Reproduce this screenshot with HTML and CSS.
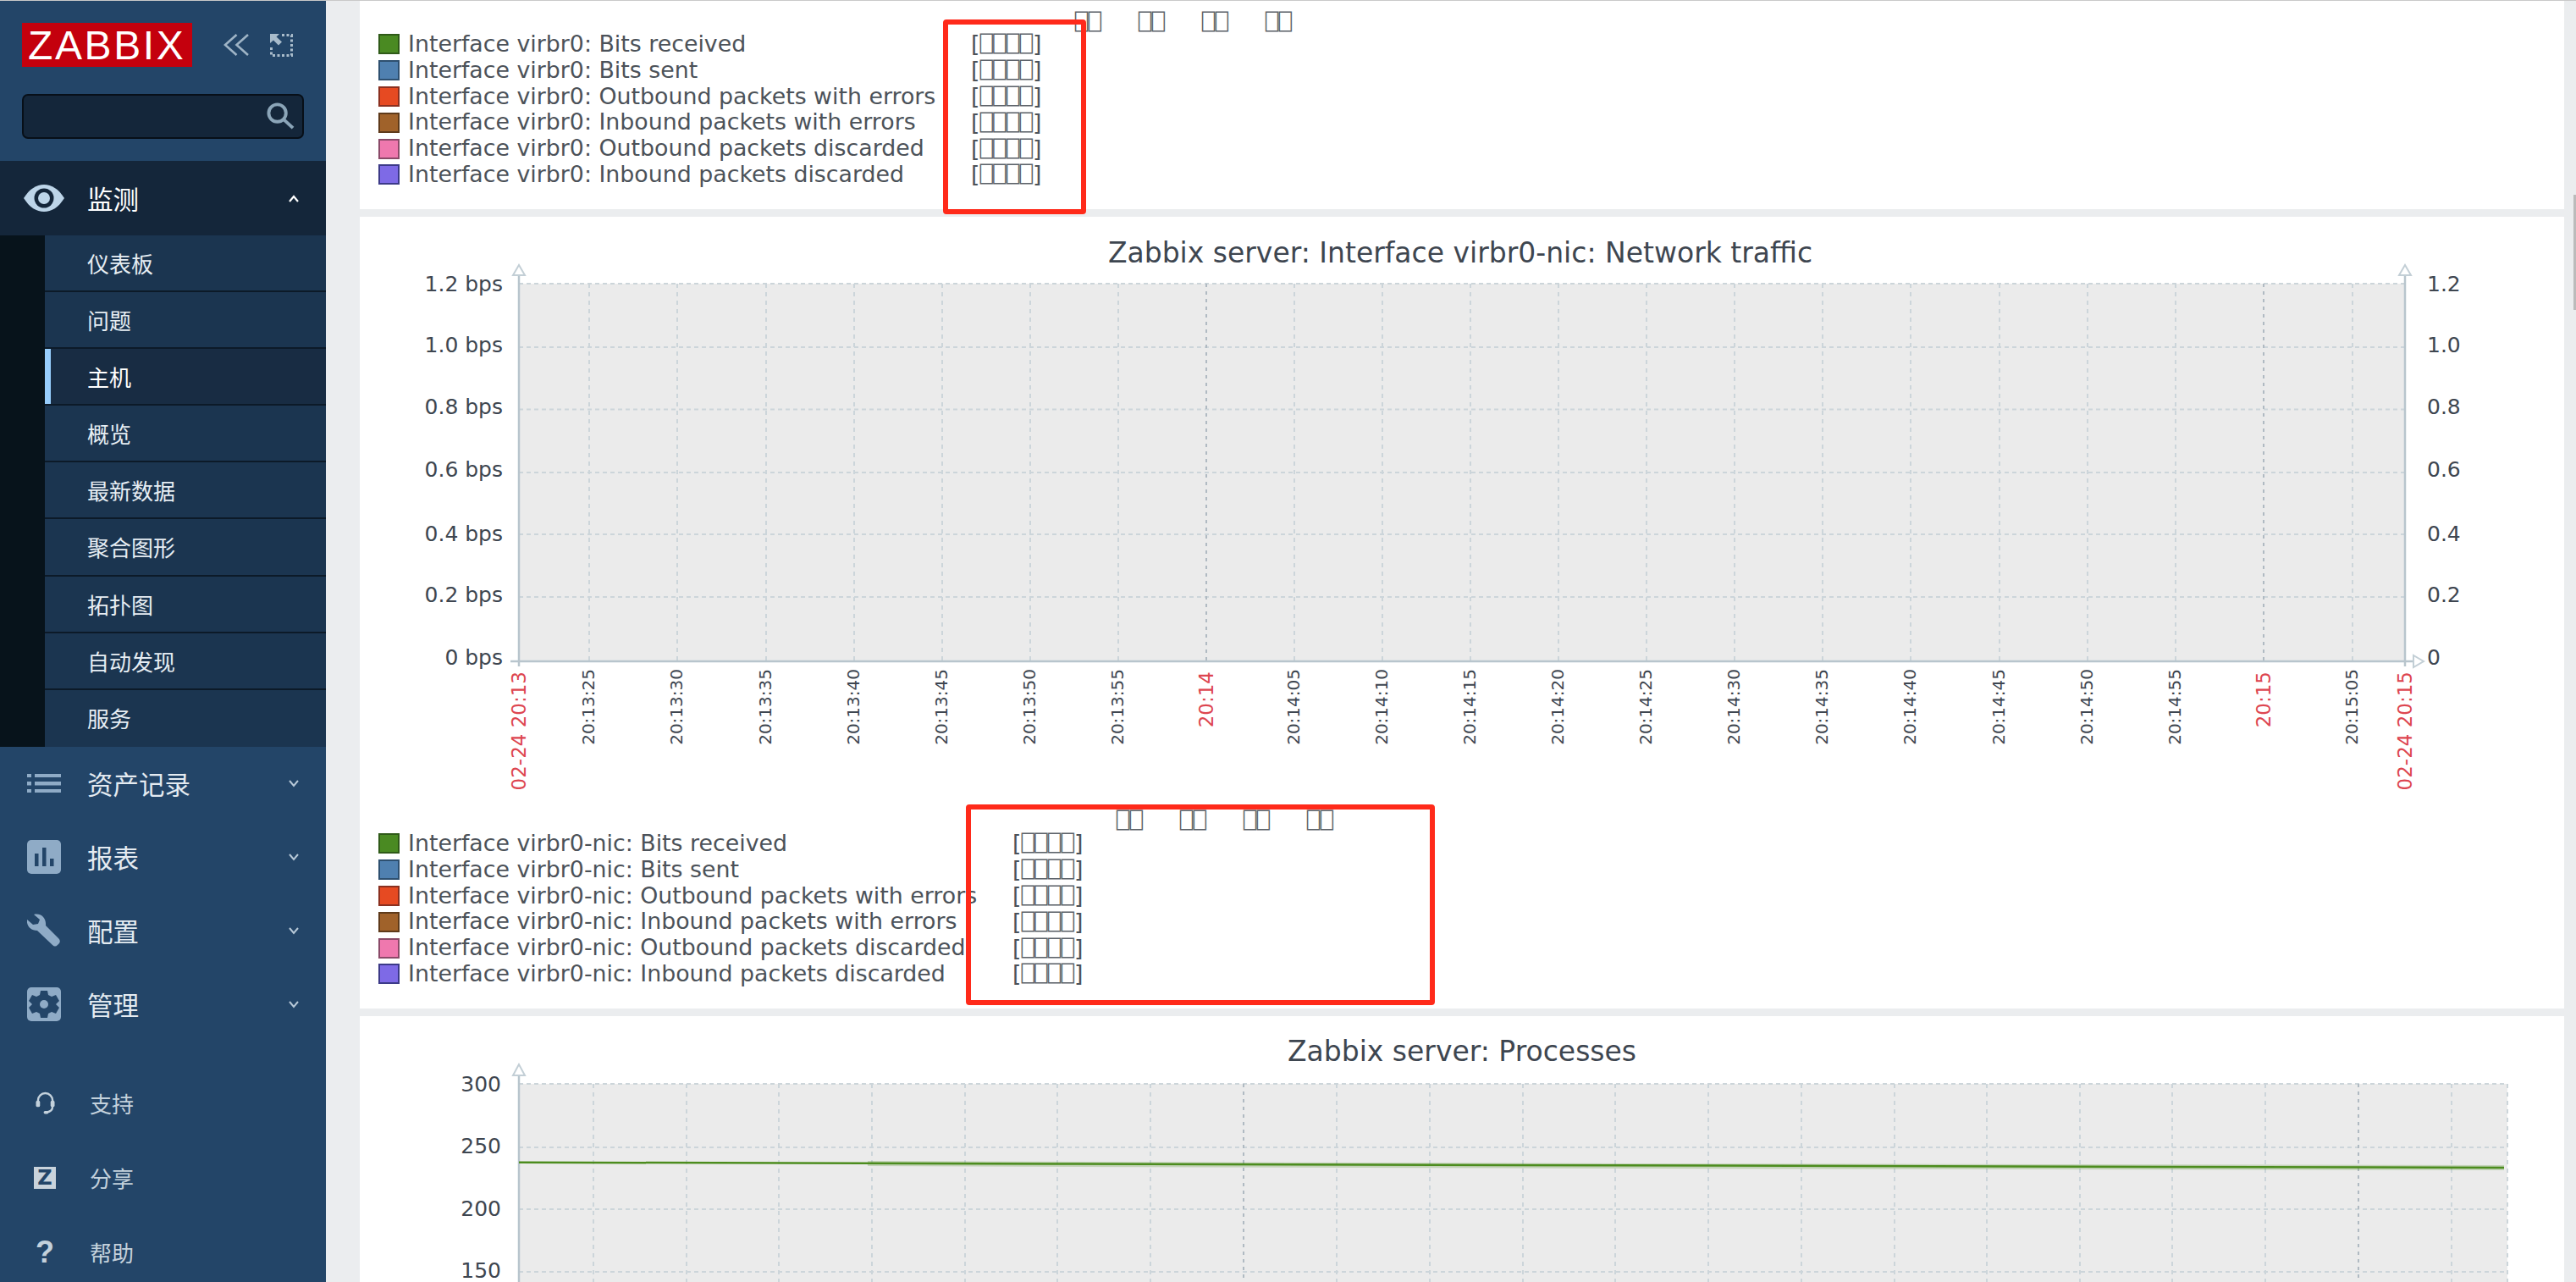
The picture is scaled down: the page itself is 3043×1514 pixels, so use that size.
FILE: index.html
```html
<!DOCTYPE html>
<html lang="zh-CN">
<head>
<meta charset="utf-8">
<title>Zabbix</title>
<link rel="stylesheet" href="styles.css">
</head>
<body>
<aside class="sidebar">
  <div class="brand">
    <div class="logo">ZABBIX</div>
    <svg class="ico-collapse" viewBox="0 0 30 26"><path d="M15.500 1 2 13l13.500 12M29 1 15.500 13 29 25"/></svg>
    <svg class="ico-expand" viewBox="0 0 27 27"><path class="dots" d="M14 1.500h11.500v24h-24V14"/><path class="solid" d="M0 0h11L7.500 3.500l6.500 6-4 4-6-6L0 11z"/></svg>
  </div>
  <div class="search">
    <svg class="ico-search" viewBox="0 0 34 34"><circle cx="13" cy="13" r="10.500"/><path d="M21 21l11 10"/></svg>
  </div>
  <nav class="nav">
    <div class="group group-open">
      <div class="head head-open">
        <svg class="ico" viewBox="0 0 48 32"><path class="eye" d="M0 16C7 5 15 0 24 0s17 5 24 16c-7 11-15 16-24 16S7 27 0 16z"/><circle class="eye-ring" cx="24" cy="16" r="11.500"/><circle class="eye" cx="24" cy="16" r="7"/></svg>
        <span class="head-label">监测</span>
        <svg class="chev chev-up" viewBox="0 0 12 9"><path d="M1 8l5-6 5 6"/></svg>
      </div>
      <ul class="sub">
        <li>仪表板</li>
        <li>问题</li>
        <li class="current">主机</li>
        <li>概览</li>
        <li>最新数据</li>
        <li>聚合图形</li>
        <li>拓扑图</li>
        <li>自动发现</li>
        <li>服务</li>
      </ul>
    </div>
    <div class="head">
      <svg class="ico" viewBox="0 0 40 22"><path class="fill" d="M0 0h5v4H0zM9 0h31v4H9zM0 9h5v4.500H0zM9 9h31v4.500H9zM0 18h5v4H0zM9 18h31v4H9z"/></svg>
      <span class="head-label">资产记录</span>
      <svg class="chev" viewBox="0 0 12 9"><path d="M1 1l5 6 5-6"/></svg>
    </div>
    <div class="head">
      <svg class="ico" viewBox="0 0 40 40"><rect class="fill" width="40" height="40" rx="5"/><path class="cut" d="M9 16h4.500v15H9zM18 9h4.500v22H18zM27 22h4.500v9H27z"/></svg>
      <span class="head-label">报表</span>
      <svg class="chev" viewBox="0 0 12 9"><path d="M1 1l5 6 5-6"/></svg>
    </div>
    <div class="head">
      <svg class="ico" viewBox="0 0 40 40"><path class="fill" d="M8 1l7 6-2 5-6 1L0 7C-1 14 4 20 12 20l18 17q3 3 6 0l2-2q2-3-1-6L22 14C23 5 16-1 8 1z"/></svg>
      <span class="head-label">配置</span>
      <svg class="chev" viewBox="0 0 12 9"><path d="M1 1l5 6 5-6"/></svg>
    </div>
    <div class="head">
      <svg class="ico" viewBox="0 0 40 40"><rect class="fill" width="40" height="40" rx="5"/><path class="cut" d="M16 4h8l1 5 4 2 5-2 4 7-4 4 4 4-4 7-5-2-4 2-1 5h-8l-1-5-4-2-5 2-4-7 4-4-4-4 4-7 5 2 4-2z"/><circle class="fill" cx="20" cy="20" r="5"/></svg>
      <span class="head-label">管理</span>
      <svg class="chev" viewBox="0 0 12 9"><path d="M1 1l5 6 5-6"/></svg>
    </div>
  </nav>
  <div class="tools">
    <div class="tool">
      <span class="tool-ico"><svg class="ico-head" viewBox="0 0 24 28"><path d="M3 16V11a9 9 0 0 1 18 0v5"/><rect class="pad" x="0.500" y="11" width="5" height="8" rx="2"/><rect class="pad" x="18.500" y="11" width="5" height="8" rx="2"/><path d="M21 18c0 5-3 7-7 7.500"/><rect class="pad" x="10" y="24" width="6" height="3.500" rx="1.700"/></svg></span>
      <span>支持</span>
    </div>
    <div class="tool">
      <span class="tool-ico"><span class="share-z">Z</span></span>
      <span>分享</span>
    </div>
    <div class="tool">
      <span class="tool-ico"><span class="help-q">?</span></span>
      <span>帮助</span>
    </div>
  </div>
</aside>

<div class="page">
  <main class="content">
    <section class="card card-first">
      <div class="legend legend-short">
        <div class="legend-head"><span>⎕⎕</span><span>⎕⎕</span><span>⎕⎕</span><span>⎕⎕</span></div>
        <div class="legend-row"><i class="sw sw-green"></i><span class="lname">Interface virbr0: Bits received</span><span class="lval">[<b>⎕⎕⎕⎕</b>]</span></div>
        <div class="legend-row"><i class="sw sw-blue"></i><span class="lname">Interface virbr0: Bits sent</span><span class="lval">[<b>⎕⎕⎕⎕</b>]</span></div>
        <div class="legend-row"><i class="sw sw-red"></i><span class="lname">Interface virbr0: Outbound packets with errors</span><span class="lval">[<b>⎕⎕⎕⎕</b>]</span></div>
        <div class="legend-row"><i class="sw sw-brown"></i><span class="lname">Interface virbr0: Inbound packets with errors</span><span class="lval">[<b>⎕⎕⎕⎕</b>]</span></div>
        <div class="legend-row"><i class="sw sw-pink"></i><span class="lname">Interface virbr0: Outbound packets discarded</span><span class="lval">[<b>⎕⎕⎕⎕</b>]</span></div>
        <div class="legend-row"><i class="sw sw-purple"></i><span class="lname">Interface virbr0: Inbound packets discarded</span><span class="lval">[<b>⎕⎕⎕⎕</b>]</span></div>
      </div>
    </section>

    <section class="card card-traffic">
      <svg class="chart chart-traffic" viewBox="0 0 2604 700">
        <text class="title" x="1300" y="54" text-anchor="middle">Zabbix server: Interface virbr0-nic: Network traffic</text>
        <rect class="plot" x="188" y="79" width="2228" height="446"/>
        <g class="grid-h">
          <path d="M188 79H2416M188 154H2416M188 227.500H2416M188 302H2416M188 375H2416M188 449H2416"/>
        </g>
        <g class="grid-v">
          <path d="M271 79V525M375 79V525M480 79V525M584 79V525M688 79V525M792 79V525M896 79V525M1104 79V525M1208 79V525M1312 79V525M1416 79V525M1520 79V525M1624 79V525M1728 79V525M1832 79V525M1937 79V525M2041 79V525M2145 79V525M2354 79V525"/>
        </g>
        <g class="grid-major"><path d="M1000 79V525M2249 79V525"/></g>
        <path class="axis" d="M188 60V531M178 525H2428M2416 60V531"/>
        <path class="arrow" d="M188 57l-7 12h14zM2416 57l-7 12h14zM2438 525l-12-7v14z"/>
        <g class="ylabel ylabel-left">
          <text x="169" y="88">1.2 bps</text><text x="169" y="160">1.0 bps</text><text x="169" y="233">0.8 bps</text><text x="169" y="307">0.6 bps</text><text x="169" y="383">0.4 bps</text><text x="169" y="455">0.2 bps</text><text x="169" y="529">0 bps</text>
        </g>
        <g class="ylabel ylabel-right">
          <text x="2442" y="88">1.2</text><text x="2442" y="160">1.0</text><text x="2442" y="233">0.8</text><text x="2442" y="307">0.6</text><text x="2442" y="383">0.4</text><text x="2442" y="455">0.2</text><text x="2442" y="529">0</text>
        </g>
        <g class="xlabel">
          <text transform="translate(277,534) rotate(-90)">20:13:25</text>
          <text transform="translate(381,534) rotate(-90)">20:13:30</text>
          <text transform="translate(486,534) rotate(-90)">20:13:35</text>
          <text transform="translate(590,534) rotate(-90)">20:13:40</text>
          <text transform="translate(694,534) rotate(-90)">20:13:45</text>
          <text transform="translate(798,534) rotate(-90)">20:13:50</text>
          <text transform="translate(902,534) rotate(-90)">20:13:55</text>
          <text transform="translate(1110,534) rotate(-90)">20:14:05</text>
          <text transform="translate(1214,534) rotate(-90)">20:14:10</text>
          <text transform="translate(1318,534) rotate(-90)">20:14:15</text>
          <text transform="translate(1422,534) rotate(-90)">20:14:20</text>
          <text transform="translate(1526,534) rotate(-90)">20:14:25</text>
          <text transform="translate(1630,534) rotate(-90)">20:14:30</text>
          <text transform="translate(1734,534) rotate(-90)">20:14:35</text>
          <text transform="translate(1838,534) rotate(-90)">20:14:40</text>
          <text transform="translate(1943,534) rotate(-90)">20:14:45</text>
          <text transform="translate(2047,534) rotate(-90)">20:14:50</text>
          <text transform="translate(2151,534) rotate(-90)">20:14:55</text>
          <text transform="translate(2360,534) rotate(-90)">20:15:05</text>
        </g>
        <g class="xlabel xlabel-red">
          <text transform="translate(196,537) rotate(-90)">02-24 20:13</text>
          <text transform="translate(1008,537) rotate(-90)">20:14</text>
          <text transform="translate(2257,537) rotate(-90)">20:15</text>
          <text transform="translate(2424,537) rotate(-90)">02-24 20:15</text>
        </g>
      </svg>
      <div class="legend legend-long">
        <div class="legend-head"><span>⎕⎕</span><span>⎕⎕</span><span>⎕⎕</span><span>⎕⎕</span></div>
        <div class="legend-row"><i class="sw sw-green"></i><span class="lname">Interface virbr0-nic: Bits received</span><span class="lval">[<b>⎕⎕⎕⎕</b>]</span></div>
        <div class="legend-row"><i class="sw sw-blue"></i><span class="lname">Interface virbr0-nic: Bits sent</span><span class="lval">[<b>⎕⎕⎕⎕</b>]</span></div>
        <div class="legend-row"><i class="sw sw-red"></i><span class="lname">Interface virbr0-nic: Outbound packets with errors</span><span class="lval">[<b>⎕⎕⎕⎕</b>]</span></div>
        <div class="legend-row"><i class="sw sw-brown"></i><span class="lname">Interface virbr0-nic: Inbound packets with errors</span><span class="lval">[<b>⎕⎕⎕⎕</b>]</span></div>
        <div class="legend-row"><i class="sw sw-pink"></i><span class="lname">Interface virbr0-nic: Outbound packets discarded</span><span class="lval">[<b>⎕⎕⎕⎕</b>]</span></div>
        <div class="legend-row"><i class="sw sw-purple"></i><span class="lname">Interface virbr0-nic: Inbound packets discarded</span><span class="lval">[<b>⎕⎕⎕⎕</b>]</span></div>
      </div>
    </section>

    <section class="card card-proc">
      <svg class="chart chart-proc" viewBox="0 0 2604 314">
        <text class="title" x="1302" y="53" text-anchor="middle">Zabbix server: Processes</text>
        <rect class="plot" x="188" y="80" width="2349" height="240"/>
        <g class="grid-h">
          <path d="M188 80H2537M188 155H2537M188 228H2537M188 302H2537"/>
        </g>
        <g class="grid-v">
          <path d="M276 80V320M386 80V320M495 80V320M605 80V320M715 80V320M824 80V320M934 80V320M1154 80V320M1264 80V320M1374 80V320M1483 80V320M1593 80V320M1703 80V320M1813 80V320M1922 80V320M2032 80V320M2141 80V320M2251 80V320M2471 80V320M2537 80V320"/>
        </g>
        <g class="grid-major"><path d="M1044 80V320M2361 80V320"/></g>
        <path class="axis" d="M188 60V320"/>
        <path class="arrow" d="M188 57l-7 13h14z"/>
        <path class="data-halo" d="M600 174L1000 175.500L1500 177L2533 179"/>
        <path class="data" d="M188 172.700L824 174.500L2533 179"/>
        <g class="ylabel ylabel-left">
          <text x="167" y="89">300</text><text x="167" y="162">250</text><text x="167" y="236">200</text><text x="167" y="309">150</text>
        </g>
      </svg>
    </section>

    <div class="mark mark-one"></div>
    <div class="mark mark-two"></div>
  </main>
  <div class="scrollbar"><div class="thumb"></div></div>
</div>
</body>
</html>
```
FILE: styles.css
```css
* { box-sizing: border-box; }
html, body { margin: 0; height: 100%; }
body {
  width: 3043px;
  height: 1514px;
  overflow: hidden;
  display: flex;
  border-top: 1px solid #c9c9c9;
  background: #ebedef;
  font-family: "Noto Sans CJK SC", "DejaVu Sans", sans-serif;
}

/* sidebar */
.sidebar {
  width: 385px;
  flex: none;
  background: #234568;
  display: flex;
  flex-direction: column;
  color: #e6edf3;
  overflow: hidden;
}
.sidebar > * { flex: none; }
.brand {
  display: flex;
  align-items: center;
  padding: 26px 0 0 26px;
  height: 78px;
}
.logo {
  width: 201px;
  height: 52px;
  background: #c4000d;
  color: #fff;
  font: 48px/53px "Liberation Sans", sans-serif;
  letter-spacing: 2.600px;
  padding-left: 7px;
}
.ico-collapse { width: 30px; height: 26px; margin-left: 37px; fill: none; stroke: #9fb4c6; stroke-width: 2.600; }
.ico-expand { width: 27px; height: 27px; margin-left: 25px; }
.ico-expand .dots { fill: none; stroke: #a9bccb; stroke-width: 3; stroke-dasharray: 3 2.500; }
.ico-expand .solid { fill: #a9bccb; }
.search {
  width: 333px;
  height: 53px;
  margin: 32px 0 26px 26px;
  background: #14263a;
  border: 2px solid #070f18;
  border-radius: 7px;
  display: flex;
  align-items: center;
  justify-content: flex-end;
  padding-right: 9px;
}
.ico-search { width: 33px; height: 33px; fill: none; stroke: #8ba5b8; stroke-width: 4; }
.nav { display: flex; flex-direction: column; }
.nav > * { flex: none; }
.head {
  height: 87px;
  display: flex;
  align-items: center;
  padding: 0 32px;
  gap: 31px;
}
.head-open { height: 88px; background: #14263a; }
.head-label { font-size: 30.500px; line-height: 1; flex: 1; color: #e4ebf1; }
.head-open .head-label { color: #fff; }
.ico { width: 40px; flex: none; max-height: 40px; }
.head-open .ico { width: 48px; margin: 0 -4px; }
.eye { fill: #bdd5e9; }
.eye-ring { fill: #14263a; }
.fill { fill: #8fabc6; }
.cut { fill: #234568; }
.chev { width: 12px; height: 9px; fill: none; stroke: #b7c8d7; stroke-width: 2; }
.chev-up { stroke: #fff; stroke-width: 2.200; }
.sub {
  list-style: none;
  margin: 0;
  padding: 0 0 0 53px;
  background: #07131b;
}
.sub li {
  height: 67.100px;
  padding-left: 50px;
  font-size: 26px;
  line-height: 65px;
  color: #e6edf3;
  background: #1b3550;
  border-bottom: 2px solid #0c1a28;
}
.sub li:last-child { border-bottom: 0; }
.sub .current { background: #182c43; color: #fff; box-shadow: inset 7px 0 0 #96cdfc; }
.tools { margin-top: 29px; display: flex; flex-direction: column; }
.tool {
  height: 88px;
  flex: none;
  display: flex;
  align-items: center;
  gap: 32px;
  padding-left: 32px;
  font-size: 26px;
  color: #c3d1dc;
}
.tool-ico { width: 42px; display: flex; justify-content: center; align-items: center; }
.ico-head { width: 23px; height: 27px; fill: none; stroke: #c3d1dc; stroke-width: 2.500; }
.ico-head .pad { fill: #c3d1dc; stroke: none; }
.share-z {
  width: 26px;
  height: 26px;
  background: #c9d3dc;
  color: #234568;
  font: bold 24px/26px "DejaVu Sans", sans-serif;
  text-align: center;
}
.help-q { font: bold 36px/36px "Liberation Sans", sans-serif; color: #c3d1dc; }

/* main */
.page { flex: 1; display: flex; min-width: 0; }
.content {
  position: relative;
  flex: 1;
  padding-left: 40px;
  display: flex;
  flex-direction: column;
  gap: 9px;
  min-width: 0;
}
.card { background: #fff; overflow: hidden; flex: none; }
.card-first { height: 246px; padding-top: 12px; }
.card-traffic { height: 935px; }
.card-proc { flex: 1; }
.scrollbar { width: 14px; flex: none; background: #ebedef; padding: 229px 0 0 11px; }
.thumb { width: 3px; height: 136px; background: #bbb; }

/* legend */
.legend { font: 26.800px/1 "DejaVu Sans", sans-serif; color: #4c5259; }
.legend-head { display: flex; height: 24px; font: 26px/26px "DejaVu Sans Mono", monospace; color: #5c6269; }
.legend-long .legend-head { height: 25px; }
.legend-head span { width: 75px; text-align: center; }
.legend-short .legend-head { padding-left: 823px; }
.legend-long .legend-head { padding-left: 872px; }
.legend-row { height: 30.800px; display: flex; align-items: center; padding-left: 22px; }
.sw { width: 25px; height: 24px; margin-right: 10px; border: 2px solid; flex: none; }
.lname { white-space: nowrap; }
.legend-short .lname { width: 665px; }
.legend-long .lname { width: 714px; }
.lval { white-space: nowrap; line-height: 24px; }
.lval b { font: 26px/24px "DejaVu Sans Mono", monospace; color: #5c6269; }
.sw-green { background: #4a8a22; border-color: #2f5a18; }
.sw-blue { background: #4f80b0; border-color: #2e5070; }
.sw-red { background: #e64a22; border-color: #8a3020; }
.sw-brown { background: #a0622a; border-color: #5e3a1a; }
.sw-pink { background: #ef78ae; border-color: #8a4a68; }
.sw-purple { background: #7e6ae6; border-color: #3c3a88; }

/* charts */
.chart { display: block; width: 2604px; font-family: "DejaVu Sans", sans-serif; }
.chart-traffic { height: 700px; }
.chart-proc { height: 314px; }
.title { font-size: 33px; fill: #3e4650; }
.plot { fill: #ebebeb; }
.grid-h path { fill: none; stroke: #ccd5da; stroke-width: 2; stroke-dasharray: 5 4; }
.grid-v path { fill: none; stroke: #ccd5da; stroke-width: 2; stroke-dasharray: 5 5; }
.grid-major path { fill: none; stroke: #b0bac2; stroke-width: 2; stroke-dasharray: 4 5; }
.axis { fill: none; stroke: #b8c5cd; stroke-width: 2.500; }
.arrow { fill: #fff; stroke: #c3cfd6; stroke-width: 2; }
.ylabel text { font-size: 25px; fill: #3e4650; }
.ylabel-left text { text-anchor: end; }
.xlabel text { font-size: 20px; fill: #3e4650; text-anchor: end; }
.xlabel-red text { font-size: 23px; fill: #dd4650; }
.data { fill: none; stroke: #4c8c1e; stroke-width: 2.500; }
.data-halo { fill: none; stroke: #4c8c1e; stroke-width: 6; opacity: .25; }

/* red annotation boxes drawn over the charts */
.mark { position: absolute; border: 6px solid #ff2a1a; border-radius: 4px; pointer-events: none; }
.mark-one { left: 729px; top: 22px; width: 169px; height: 230px; }
.mark-two { left: 756px; top: 949px; width: 554px; height: 237px; }
```
